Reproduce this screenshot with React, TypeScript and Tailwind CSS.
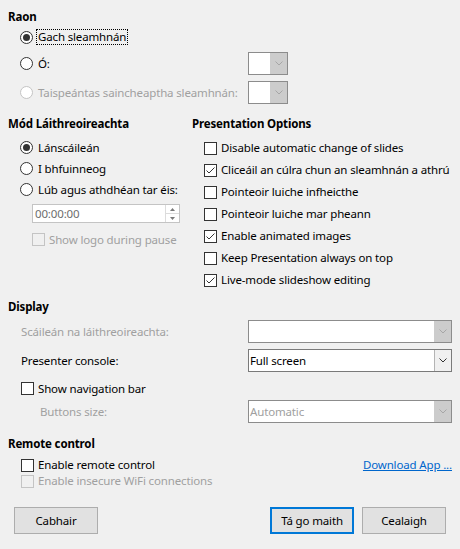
import type { ReactNode } from "react";

const Chevron = ({ color }: { color: string }) => (
  <svg width="8" height="5" viewBox="0 0 8 5">
    <polyline points="0.5,0.5 4,4 7.5,0.5" fill="none" stroke={color} strokeWidth="1" />
  </svg>
);

const Radio = ({
  checked,
  disabled,
  label,
  focus,
}: {
  checked?: boolean;
  disabled?: boolean;
  label: string;
  focus?: boolean;
}) => (
  <div className="flex items-center">
    <div
      className={`w-[13px] h-[13px] shrink-0 rounded-full border flex items-center justify-center bg-white ${
        disabled ? "border-[#c4c4c4]" : "border-[#333333]"
      }`}
    >
      {checked && <div className="w-[7px] h-[7px] rounded-full bg-[#333333]" />}
    </div>
    <span
      className={`ml-[3px] px-[1px] leading-[14px] border ${
        focus ? "border-dotted border-black" : "border-transparent"
      } ${disabled ? "text-[#a0a0a0]" : ""}`}
    >
      {label}
    </span>
  </div>
);

const Check = ({
  checked,
  disabled,
  label,
}: {
  checked?: boolean;
  disabled?: boolean;
  label: string;
}) => (
  <div className="flex items-center">
    <div
      className={`w-[13px] h-[13px] shrink-0 border flex items-center justify-center ${
        disabled ? "border-[#c4c4c4]" : "border-[#333333] bg-white"
      }`}
    >
      {checked && (
        <svg width="11" height="11" viewBox="0 0 11 11">
          <polyline points="1.5,5.5 4,8 9.5,2.5" fill="none" stroke="#333333" strokeWidth="1" />
        </svg>
      )}
    </div>
    <span className={`ml-[4px] ${disabled ? "text-[#a0a0a0]" : ""}`}>{label}</span>
  </div>
);

const Combo = ({
  value,
  disabled,
  wide,
}: {
  value?: string;
  disabled?: boolean;
  wide?: boolean;
}) => (
  <div
    className={`flex h-[23px] shrink-0 bg-white border ${wide ? "w-[204px]" : "w-[40px]"} ${
      disabled ? "border-[#8c8c8c]" : "border-[#7a7a7a]"
    }`}
  >
    <div className={`flex-1 flex items-center pl-[1px] ${disabled ? "text-[#a0a0a0]" : ""}`}>
      {value}
    </div>
    <div
      className={`w-[17px] flex items-center justify-center ${
        disabled ? "bg-[#cccccc]" : "bg-[#f0f0f0] border-l border-[#b4b4b4]"
      }`}
    >
      <Chevron color={disabled ? "#a6a6a6" : "#333333"} />
    </div>
  </div>
);

const Btn = ({ children, primary }: { children: ReactNode; primary?: boolean }) => (
  <div
    className={`w-[84px] h-[27px] flex items-center justify-center bg-[#e1e1e1] ${
      primary ? "border-2 border-[#0078d7]" : "border border-[#adadad]"
    }`}
  >
    {children}
  </div>
);

const Heading = ({ children }: { children: ReactNode }) => (
  <div className="font-bold h-4 leading-4">{children}</div>
);

export default function App() {
  return (
    <div className="w-[460px] h-[549px] bg-[#f0f0f0] text-[11.5px] tracking-[-0.15px] leading-4 text-black whitespace-nowrap font-['Segoe_UI','Noto_Sans',sans-serif] overflow-hidden">
      {/* Raon */}
      <div className="pl-2 pt-[9px]">
        <Heading>Raon</Heading>
        <div className="pl-3">
          <div className="h-[24px] flex items-center">
            <Radio checked focus label="Gach sleamhnán" />
          </div>
          <div className="h-[23px] mt-[3px] flex items-center">
            <div className="w-[228px]">
              <Radio label="Ó:" />
            </div>
            <Combo disabled />
          </div>
          <div className="h-[23px] mt-[6px] flex items-center">
            <div className="w-[228px]">
              <Radio disabled label="Taispeántas saincheaptha sleamhnán:" />
            </div>
            <Combo disabled />
          </div>
        </div>
      </div>

      {/* Mode + options */}
      <div className="grid grid-cols-[184px_1fr] pl-2 mt-3">
        <div>
          <Heading>Mód Láithreoireachta</Heading>
          <div className="pl-3 mt-[5px]">
            <div className="h-[21px] flex items-center">
              <Radio checked label="Lánscáileán" />
            </div>
            <div className="h-[21px] flex items-center">
              <Radio label="I bhfuinneog" />
            </div>
            <div className="h-[21px] flex items-center">
              <Radio label="Lúb agus athdhéan tar éis:" />
            </div>
            <div className="ml-3 mt-[4px] w-[148px] h-[19px] flex bg-white border border-[#c4c4c4]">
              <div className="flex-1 flex items-center pl-[2px] text-[#6d6d6d]">00:00:00</div>
              <div className="w-[14px] flex flex-col border-l border-[#dcdcdc]">
                <div className="flex-1 flex items-center justify-center border-b border-[#dcdcdc]">
                  <svg width="5" height="3" viewBox="0 0 5 3">
                    <polygon points="0,3 2.5,0 5,3" fill="#7a7a7a" />
                  </svg>
                </div>
                <div className="flex-1 flex items-center justify-center">
                  <svg width="5" height="3" viewBox="0 0 5 3">
                    <polygon points="0,0 2.5,3 5,0" fill="#7a7a7a" />
                  </svg>
                </div>
              </div>
            </div>
            <div className="ml-3 mt-[6px] h-[21px] flex items-center">
              <Check disabled label="Show logo during pause" />
            </div>
          </div>
        </div>
        <div>
          <Heading>Presentation Options</Heading>
          <div className="pl-3 mt-[5px]">
            {[
              ["Disable automatic change of slides", false],
              ["Cliceáil an cúlra chun an sleamhnán a athrú", true],
              ["Pointeoir luiche infheicthe", false],
              ["Pointeoir luiche mar pheann", false],
              ["Enable animated images", true],
              ["Keep Presentation always on top", false],
              ["Live-mode slideshow editing", true],
            ].map(([label, checked]) => (
              <div key={label as string} className="h-[22px] flex items-center">
                <Check checked={checked as boolean} label={label as string} />
              </div>
            ))}
          </div>
        </div>
      </div>

      {/* Display */}
      <div className="pl-2 mt-[8px]">
        <Heading>Display</Heading>
        <div className="pl-[13px]">
          <div className="h-[23px] mt-[5px] flex items-center">
            <div className="w-[227px] text-[#a0a0a0]">Scáileán na láithreoireachta:</div>
            <Combo wide disabled />
          </div>
          <div className="h-[23px] mt-[6px] flex items-center">
            <div className="w-[227px]">Presenter console:</div>
            <Combo wide value="Full screen" />
          </div>
          <div className="h-[21px] mt-[6px] flex items-center">
            <Check label="Show navigation bar" />
          </div>
          <div className="h-[23px] mt-[1px] flex items-center">
            <div className="w-[227px] pl-[19px] text-[#a0a0a0]">Buttons size:</div>
            <Combo wide disabled value="Automatic" />
          </div>
        </div>
      </div>

      {/* Remote control */}
      <div className="pl-2 mt-[13px]">
        <Heading>Remote control</Heading>
        <div className="pl-[13px] pr-2 mt-[5px]">
          <div className="h-4 flex items-center justify-between">
            <Check label="Enable remote control" />
            <span className="text-[#0066cc] underline">Download App ...</span>
          </div>
          <div className="h-4 flex items-center">
            <Check disabled label="Enable insecure WiFi connections" />
          </div>
        </div>
      </div>

      {/* Buttons */}
      <div className="mt-[18px] pl-[14px] pr-[14px] flex items-center">
        <Btn>Cabhair</Btn>
        <div className="flex-1" />
        <Btn primary>Tá go maith</Btn>
        <div className="w-2" />
        <Btn>Cealaigh</Btn>
      </div>
    </div>
  );
}
